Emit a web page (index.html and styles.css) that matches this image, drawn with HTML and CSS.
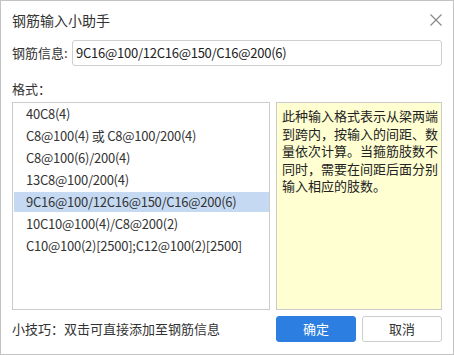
FILE: index.html
```html
<!DOCTYPE html>
<html lang="zh-CN">
<head>
<meta charset="utf-8">
<link rel="stylesheet" href="styles.css">
</head>
<body>
<div class="dialog">
  <div class="header">
    <span class="title">钢筋输入小助手</span>
    <svg class="close" width="12" height="12" viewBox="0 0 12 12"><path d="M0.5 0.5 L11.5 11.5 M11.5 0.5 L0.5 11.5" stroke="#8a8a8a" stroke-width="1.2" fill="none"/></svg>
  </div>
  <div class="field">
    <span class="label">钢筋信息:</span>
    <div class="input">9C16@100/12C16@150/C16@200(6)</div>
  </div>
  <div class="section">格式：</div>
  <div class="main">
    <ul class="list">
      <li>40C8(4)</li>
      <li>C8@100(4) 或 C8@100/200(4)</li>
      <li>C8@100(6)/200(4)</li>
      <li>13C8@100/200(4)</li>
      <li class="selected">9C16@100/12C16@150/C16@200(6)</li>
      <li>10C10@100(4)/C8@200(2)</li>
      <li>C10@100(2)[2500];C12@100(2)[2500]</li>
    </ul>
    <div class="desc">此种输入格式表示从梁两端<br>到跨内，按输入的间距、数<br>量依次计算。当箍筋肢数不<br>同时，需要在间距后面分别<br>输入相应的肢数。</div>
  </div>
  <div class="footer">
    <span class="tip">小技巧：双击可直接添加至钢筋信息</span>
    <div class="buttons">
      <div class="btn primary">确定</div>
      <div class="btn">取消</div>
    </div>
  </div>
</div>
</body>
</html>
```
FILE: styles.css
```css
* { box-sizing: border-box; }
html, body { margin: 0; padding: 0; background: #fff; }
body {
  font-family: "Noto Sans CJK SC", "Noto Sans", sans-serif;
  font-size: 13px;
  color: #333;
}
.dialog {
  width: 454px;
  height: 355px;
  border: 1px solid #c3c3c3;
  padding: 0 11px;
  display: flex;
  flex-direction: column;
}
.header {
  display: flex;
  justify-content: space-between;
  align-items: center;
  height: 29px;
  padding-top: 8px;
}
.title { font-size: 14px; line-height: 20px; color: #333; }
.close { margin-right: 0; margin-top: 1px; }
.field {
  display: flex;
  align-items: center;
  margin-top: 10px;
  height: 26px;
}
.label { width: 60px; line-height: 20px; }
.input {
  flex: 1;
  height: 26px;
  border: 1px solid #cfcfcf;
  border-radius: 3px;
  padding: 0 3px;
  line-height: 24px;
  font-size: 13px;
  color: #222;
  letter-spacing: -0.25px;
}
.section { margin-top: 13px; line-height: 20px; }
.main {
  display: flex;
  gap: 6px;
  margin-top: 3px;
  height: 208px;
}
.list {
  list-style: none;
  margin: 0;
  width: 258px;
  border: 1px solid #cbcbcb;
  padding: 1px 0 0 1px;
}
.list li {
  height: 20px;
  line-height: 20px;
  margin-bottom: 2px;
  padding-left: 12px;
  color: #333;
  white-space: nowrap;
  letter-spacing: -0.25px;
}
.list li.selected { background: #c5daf2; }
.desc {
  width: 166px;
  border: 1px solid #cbcbcb;
  background: #ffffd1;
  padding: 4px 0 0 5px;
  line-height: 17.5px;
  color: #222;
  white-space: nowrap;
  overflow: hidden;
}
.footer {
  display: flex;
  justify-content: space-between;
  align-items: center;
  margin-top: 6px;
}
.tip { line-height: 20px; color: #333; }
.buttons { display: flex; gap: 6px; }
.btn {
  width: 80px;
  height: 26px;
  border: 1px solid #cdcdcd;
  border-radius: 3px;
  text-align: center;
  line-height: 24px;
  font-size: 13px;
  color: #333;
  background: #fff;
}
.btn.primary { background: #2c7ee0; border-color: #2c7ee0; color: #fff; }
```
